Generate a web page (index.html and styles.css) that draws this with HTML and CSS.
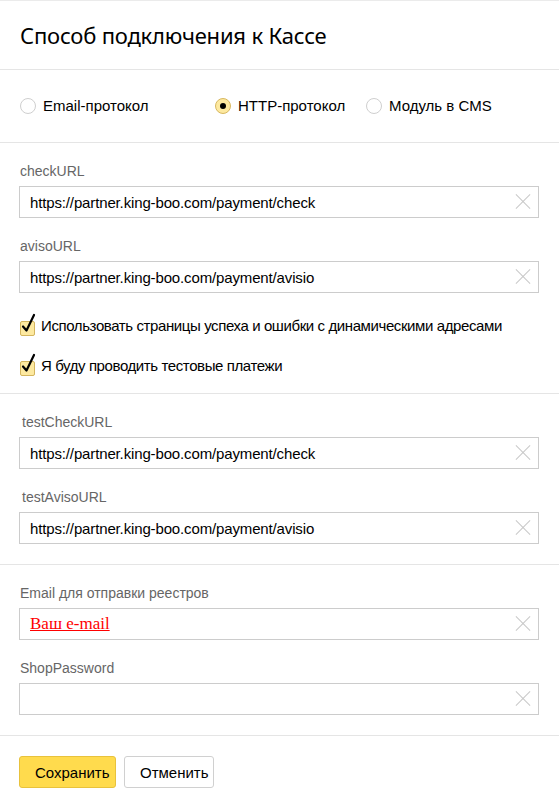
FILE: index.html
```html
<!DOCTYPE html>
<html lang="ru">
<head>
<meta charset="utf-8">
<link rel="stylesheet" href="styles.css">
</head>
<body>
<div class="panel">
  <div class="section header">
    <h1 class="title">Способ подключения к Кассе</h1>
  </div>
  <div class="section radios">
    <label class="radio r1"><span class="circle"></span>Email-протокол</label>
    <label class="radio r2"><span class="circle on"></span>HTTP-протокол</label>
    <label class="radio r3"><span class="circle"></span>Модуль в CMS</label>
  </div>
  <div class="section fields">
    <div class="field">
      <div class="label">checkURL</div>
      <div class="input"><span class="val">https://partner.king-boo.com/payment/check</span><span class="clear"></span></div>
    </div>
    <div class="field">
      <div class="label">avisoURL</div>
      <div class="input"><span class="val">https://partner.king-boo.com/payment/avisio</span><span class="clear"></span></div>
    </div>
    <div class="checks">
      <div class="check"><span class="box"><svg viewBox="0 0 16 20" width="16" height="20"><path d="M3 13.5 L6.5 17.5 L14 2" fill="none" stroke="#000" stroke-width="2.2" stroke-linecap="round" stroke-linejoin="round"/></svg></span>Использовать страницы успеха и ошибки с динамическими адресами</div>
      <div class="check"><span class="box"><svg viewBox="0 0 16 20" width="16" height="20"><path d="M3 13.5 L6.5 17.5 L14 2" fill="none" stroke="#000" stroke-width="2.2" stroke-linecap="round" stroke-linejoin="round"/></svg></span>Я буду проводить тестовые платежи</div>
    </div>
  </div>
  <div class="section fields">
    <div class="field">
      <div class="label shifted">testCheckURL</div>
      <div class="input"><span class="val">https://partner.king-boo.com/payment/check</span><span class="clear"></span></div>
    </div>
    <div class="field">
      <div class="label shifted">testAvisoURL</div>
      <div class="input"><span class="val">https://partner.king-boo.com/payment/avisio</span><span class="clear"></span></div>
    </div>
  </div>
  <div class="section fields">
    <div class="field">
      <div class="label">Email для отправки реестров</div>
      <div class="input"><span class="val email">Ваш e-mail</span><span class="clear"></span></div>
    </div>
    <div class="field">
      <div class="label">ShopPassword</div>
      <div class="input"><span class="val"></span><span class="clear"></span></div>
    </div>
  </div>
  <div class="section buttons">
    <button class="btn save">Сохранить</button>
    <button class="btn cancel">Отменить</button>
  </div>
</div>
</body>
</html>
```
FILE: styles.css
```css
* { box-sizing: border-box; }
html, body { margin: 0; padding: 0; background: #fff; }
body { font-family: "Liberation Sans", Arial, sans-serif; color: #000; }
.panel { width: 559px; border-top: 1px solid #ebebeb; }
.section { border-bottom: 1px solid #e5e5e5; padding: 0 20px; }
.header { height: 69px; display: flex; align-items: center; padding-bottom: 1px; }
.title { margin: 0; font-family: "Noto Sans", sans-serif; font-weight: 400; font-size: 22px; color: #000; letter-spacing: -0.2px; }
.radios { height: 73px; display: flex; align-items: center; font-size: 15px; padding-bottom: 1px; }
.radio { display: flex; align-items: center; color: #000; }
.circle { width: 16px; height: 16px; border-radius: 50%; border: 1px solid #cfcfcf; background: #fff; margin-right: 7px; display: inline-flex; align-items: center; justify-content: center; }
.circle.on { background: #fde9a0; border-color: #d8b860; }
.circle.on::after { content: ""; width: 6px; height: 6px; border-radius: 50%; background: #000; }
.r1 { width: 195px; }
.r2 { width: 151px; }
.fields { display: flex; flex-direction: column; gap: 20px; padding-top: 20px; padding-bottom: 20px; }
.field { display: flex; flex-direction: column; gap: 7px; }
.label { font-size: 14px; line-height: 16px; color: #666; }
.label.shifted { padding-left: 2px; }
.input { height: 32px; width: 520px; margin-left: -1px; border: 1px solid #ccc; display: flex; align-items: center; padding: 0 10px; font-size: 15px; position: relative; }
.val { flex: 1; color: #000; letter-spacing: -0.14px; }
.val.email { font-family: "Liberation Serif", serif; color: #f00; text-decoration: underline; font-size: 17px; letter-spacing: 0; }
.clear { width: 14px; height: 14px; position: relative; margin-right: -2px; }
.clear::before, .clear::after { content: ""; position: absolute; left: -3px; top: 6px; width: 20px; height: 1px; background: #c8c8c8; }
.clear::before { transform: rotate(45deg); }
.clear::after { transform: rotate(-45deg); }
.checks { display: flex; flex-direction: column; gap: 20px; margin-top: 3px; margin-bottom: -3px; }
.check { display: flex; align-items: center; font-size: 15px; line-height: 20px; height: 20px; letter-spacing: -0.4px; }
.box { width: 15px; height: 15px; border: 1px solid #d4b55e; border-radius: 2px; background: #fde9a0; margin-right: 6px; position: relative; margin-top: 4px; }
.box svg { position: absolute; left: -1px; top: -9px; }
.buttons { border-bottom: none; display: flex; gap: 8px; padding-top: 20px; padding-left: 19px; }
.btn { height: 32px; font-family: "Liberation Sans", Arial, sans-serif; font-size: 15px; border-radius: 3px; padding: 0 15px; color: #000; }
.save { width: 97px; background: #ffdb4d; border: 1px solid #e8c23c; }
.cancel { width: 90px; background: #fff; border: 1px solid #d0d0d0; }
```
